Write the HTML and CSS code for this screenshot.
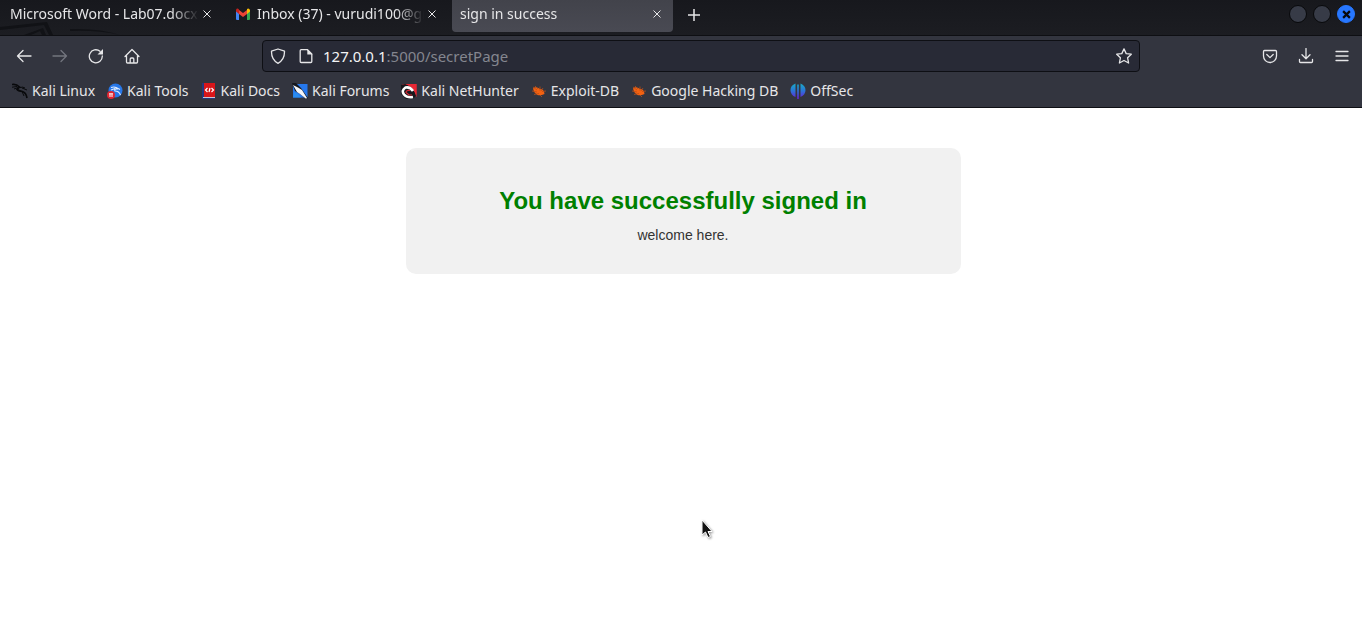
FILE: index.html
```html
<!DOCTYPE html>
<html lang="en">
<head>
<meta charset="utf-8">
<title>sign in success</title>
<link rel="stylesheet" href="styles.css">
</head>
<body>
<header class="browser">
  <div class="tabbar">
    <svg class="wallpaper" viewBox="0 0 130 36" aria-hidden="true"><path d="M0 27 47 22 53 35H49L44 25 0 30ZM24 35 43 28 46 35H42L40 31 31 35ZM70 29Q100 28 120 35 98 30 70 31Z" fill="#111216"/></svg>
    <div class="tab">
      <span class="tab-title">Microsoft Word - Lab07.docx</span>
      <button class="close" aria-label="Close tab"><svg viewBox="0 0 8 8"><path d="M.5.5l7 7M7.500.5l-7 7"/></svg></button>
    </div>
    <div class="tab tab-mail">
      <svg class="mail" viewBox="0 0 16 12" aria-hidden="true"><path d="M1 2v9q0 1 1 1h2V4z" fill="#4285f4"/><path d="M12 4v8h2q1 0 1-1V2z" fill="#34a853"/><path d="M12 2v4l3-2.500V2Q14-.5 12 1z" fill="#fbbc04"/><path d="M4 6V2l4 3 4-3v4L8 9z" fill="#ea4335"/><path d="M1 2v1.500L4 6V1.500Q2-.5 1 2z" fill="#c5221f"/></svg>
      <span class="tab-title">Inbox (37) - vurudi100@gr</span>
      <button class="close" aria-label="Close tab"><svg viewBox="0 0 8 8"><path d="M.5.5l7 7M7.500.5l-7 7"/></svg></button>
    </div>
    <div class="tab tab-active">
      <span class="tab-title">sign in success</span>
      <button class="close" aria-label="Close tab"><svg viewBox="0 0 8 8"><path d="M.5.5l7 7M7.500.5l-7 7"/></svg></button>
    </div>
    <button class="new-tab" aria-label="New tab"><svg viewBox="0 0 12 12"><path d="M6 0v12M0 6h12"/></svg></button>
    <div class="window-controls">
      <button class="dot" aria-label="Minimize"></button>
      <button class="dot" aria-label="Maximize"></button>
      <button class="dot dot-close" aria-label="Close window"><svg viewBox="0 0 8 8"><path d="M1 1l6 6M7 1L1 7"/></svg></button>
    </div>
  </div>
  <div class="navbar">
    <div class="nav-group">
      <button class="icon" aria-label="Back"><svg viewBox="0 0 16 16"><path d="M15 8H1.500M7 2.500 1.500 8 7 13.500"/></svg></button>
      <button class="icon" aria-label="Forward" disabled><svg viewBox="0 0 16 16"><path d="M1 8h13.500M9 2.500 14.500 8 9 13.500"/></svg></button>
      <button class="icon" aria-label="Reload"><svg viewBox="0 0 16 16"><path d="M14.300 8A6.500 6.500 0 1 1 12 3.300"/><path d="M15 1v5.500H9.500z" fill="currentColor" stroke="none"/></svg></button>
      <button class="icon" aria-label="Home"><svg viewBox="0 0 16 16"><path d="M1 8.500 8 1.500l7 7M2.500 7.500V14q0 1 1 1h9q1 0 1-1V7.500M6.200 15v-4q0-1 1-1h1.600q1 0 1 1v4"/></svg></button>
    </div>
    <form class="address">
      <svg class="glyph" viewBox="0 0 16 16" aria-hidden="true"><path d="M8 1 1.500 3.200C1.300 9.500 3.500 13 8 15.300c4.500-2.300 6.700-5.800 6.500-12.100z"/></svg>
      <svg class="glyph glyph-page" viewBox="0 0 16 16" aria-hidden="true"><path d="M9.500 1.700H3.200q-1 0-1 1v10.800q0 1 1 1h9.600q1 0 1-1V6z"/><path d="M9.300 1v5.500H14.500z" fill="currentColor" stroke="none"/></svg>
      <label class="host" for="url">127.0.0.1</label><input class="path" id="url" type="text" value=":5000/secretPage" spellcheck="false">
      <button class="star" type="button" aria-label="Bookmark"><svg viewBox="0 0 16 16"><path d="M8 .9l2.200 4.700 5.100.6-3.700 3.600 1 5.200L8 12.500 3.400 15l1-5.200L.7 6.200l5.100-.6z"/></svg></button>
    </form>
    <div class="nav-group nav-tools">
      <button class="icon" aria-label="Save to Pocket"><svg viewBox="0 0 16 16"><path d="M2.500 2.500h11q1 0 1 1V8a6.500 6.500 0 0 1-13 0V3.500q0-1 1-1zM4.800 6.500 8 9.600l3.200-3.100"/></svg></button>
      <button class="icon" aria-label="Downloads"><svg viewBox="0 0 16 16"><path d="M8 .5v10M4 6.700l4 4 4-4M1.500 11.500v2q0 1 1 1h11q1 0 1-1v-2"/></svg></button>
      <button class="icon" aria-label="Menu"><svg viewBox="0 0 16 16"><path d="M2 3.500h12M2 8h12M2 12.500h12"/></svg></button>
    </div>
  </div>
  <nav class="bookmarks">
    <a href="#kali"><svg viewBox="0 0 16 16"><g fill="none" stroke="#08090b"><path d="M0 1.500Q4 .5 7.500 4L5 6.300Q6 8 10.500 8.500 14 9.500 15 15" stroke-width="1.700"/><path d="M0 4.200 5 3.500M2 6l4-1.500M8 4.500q3-1 5 .5M10 5l5 2M10 8.500 12 13"/></g></svg>Kali Linux</a>
    <a href="#tools"><svg viewBox="0 0 16 16"><circle cx="8.500" cy="7.500" r="7" fill="#2777e8"/><path d="M4 4.500q5-1.500 6 1.500-3-.5-2 2 4 0 5.500 4M4 7l4-1.500M9 4.500l4 2" fill="none" stroke="#dceaff" stroke-width="1.200"/><circle cx="4" cy="12" r="4" fill="#df2632"/><path d="M2 10.800h4M3 11v3M5 11v3" stroke="#fff"/></svg>Kali Tools</a>
    <a href="#docs"><svg viewBox="0 0 16 16"><path d="M1 0h13v16H1z" fill="#25377e"/><path d="M3 0h11v14H3z" fill="#d9151a"/><path d="M2 14h12v1H2z" fill="#c9c5d5"/><path d="M6.500 5 4.500 7l2 2M10.500 5l2 2-2 2M9 5 8 9" fill="none" stroke="#fff" stroke-width="1.200"/></svg>Kali Docs</a>
    <a href="#forums"><svg viewBox="0 0 16 16"><path d="M1 1h14.500v13.500H1z" fill="#2678ed"/><path d="M0 0h4l5 5 7 10-2 1-6-5-5-3z" fill="#15181f"/><path d="M1 2 6 4.500 10 7l5 8-1 .8L8 11 5 9z" fill="#f4f6fa"/><path d="M2 9 1 14.500h8L6 11z" fill="#2a8cf0"/></svg>Kali Forums</a>
    <a href="#nethunter"><svg viewBox="0 0 16 16"><path d="M1 1h14.500v13L13 12 4 4z" fill="#e82734"/><path d="M0 2 4 1l8 3 3 9-3 3H5l-5-5z" fill="#17181d"/><path d="M5 1h10.500v11L11 5z" fill="#e82734"/><path d="M12 8Q9 3.500 4.500 4.500 0 7.500 3 11.500q3 3.500 9 2.500" fill="none" stroke="#fff" stroke-width="2.600"/><path d="M9 7.500Q5 7 5 9.500l3 2.500h3" fill="none" stroke="#d42a36" stroke-width="1.200"/></svg>Kali NetHunter</a>
    <a href="#exploit"><svg viewBox="0 0 16 16"><path d="M2 5.500Q5 3 9 6q4 0 4.500 5-4 2-7 1Q3 10 2 5.500z" fill="#f26111"/><path d="M2 4 6 7M1 8l5 1M3 11.500l5-1M9 3.500v4M12 5l-2 3M11 8.500l4-.5M9 12l2 2M4 3l3 3" stroke="#b94e18" stroke-width=".8"/></svg>Exploit-DB</a>
    <a href="#ghdb"><svg viewBox="0 0 16 16"><path d="M2 5.500Q5 3 9 6q4 0 4.500 5-4 2-7 1Q3 10 2 5.500z" fill="#f26111"/><path d="M2 4 6 7M1 8l5 1M3 11.500l5-1M9 3.500v4M12 5l-2 3M11 8.500l4-.5M9 12l2 2M4 3l3 3" stroke="#b94e18" stroke-width=".8"/></svg>Google Hacking DB</a>
    <a href="#offsec"><svg viewBox="0 0 16 16"><defs><linearGradient id="violet" gradientUnits="userSpaceOnUse" x1="0" y1="0" x2="0" y2="16"><stop stop-color="#16b0c4"/><stop offset=".5" stop-color="#2b73d8"/><stop offset="1" stop-color="#6a1bd5"/></linearGradient></defs><path d="M5.500 .5v13.500Q.5 12 .5 7.200T5.500 .5zM7.200 1.500h1.600V16H7.200zM10.500 .5q5 2 5 6.700t-5 6.800z" fill="url(#violet)"/></svg>OffSec</a>
  </nav>
</header>
<main class="page">
  <section class="card">
    <h1>You have successfully signed in</h1>
    <p>welcome here.</p>
  </section>
</main>
<svg class="cursor" viewBox="0 0 12 20" aria-hidden="true"><path d="M1 1v15l3.500-3 2.500 5.500 2.500-1-2.500-5h4z" fill="#111" stroke="#fff"/></svg>
</body>
</html>
```
FILE: styles.css
```css
* { box-sizing: border-box; }
body { margin: 0; background: #fff; }
button { display: flex; align-items: center; justify-content: center; padding: 0; border: 0; background: none; color: inherit; }
svg { display: block; flex: none; }
.browser { font: 14px/20px "Noto Sans", sans-serif; color: #e6e6e8; background: #33353f; border-bottom: 1px solid #0e0f14; }

.tabbar { position: relative; display: flex; align-items: flex-start; height: 36px; background: linear-gradient(#17181d, #1c1d22); border-bottom: 1px solid #0e0f13; }
.wallpaper { position: absolute; left: 0; top: 0; width: 130px; height: 36px; }
.tab { position: relative; display: flex; align-items: center; width: 221px; height: 32px; margin-right: 4px; padding: 0 10px 4px; }
.tab-title { flex: 1; min-width: 0; overflow: hidden; white-space: nowrap; mask-image: linear-gradient(to left, transparent, #000 28px); }
.tab-mail { margin-right: 6px; }
.mail { width: 16px; height: 12px; margin-right: 6px; }
.tab-active { padding: 0 12px 4px 8px; background: linear-gradient(#42434b, #494a53); border-radius: 0 0 4px 4px; }
.close { width: 8px; height: 20px; margin-left: 4px; }
.close svg { width: 8px; height: 8px; overflow: visible; }
.close svg, .new-tab svg { fill: none; stroke: #e6e6e8; }
.new-tab { width: 34px; height: 30px; }
.new-tab svg { width: 12px; height: 12px; stroke-width: 1.5; }
.window-controls { display: flex; gap: 6px; margin-left: auto; padding: 5px 7px 0 0; }
.dot { width: 18px; height: 18px; border: 1px solid #08090b; border-radius: 50%; background: #373b47; }
.dot-close { border-color: #2777ff; background: #2777ff; }
.dot svg { width: 9px; height: 9px; stroke: #08090b; stroke-width: 2; }

.navbar { display: flex; align-items: center; justify-content: space-between; height: 40px; padding: 0 8px 0 12px; }
.nav-group { display: flex; gap: 12px; width: 250px; }
.icon { width: 24px; height: 24px; }
.icon:disabled { color: #73757e; }
.icon svg, .glyph, .star svg { width: 16px; height: 16px; fill: none; stroke: currentColor; stroke-width: 1.3; stroke-linecap: round; stroke-linejoin: round; }
.nav-tools { width: 210px; justify-content: flex-end; }
.address { display: flex; align-items: center; flex: 1; max-width: 878px; height: 32px; margin-right: auto; padding: 0 7px; font-size: 15px; background: #282a36; border: 1px solid #0e0f14; border-radius: 4px; }
.glyph-page { margin: 0 9px 0 12px; }
.host { color: #f4f4f5; }
.path { flex: 1; min-width: 0; padding: 0; border: 0; outline: 0; background: none; color: #84868f; font: inherit; }

.bookmarks { display: flex; align-items: center; gap: 12px; height: 31px; padding: 0 12px 2px; white-space: nowrap; }
.bookmarks a { display: flex; align-items: center; gap: 4px; color: inherit; text-decoration: none; }
.bookmarks svg { width: 16px; height: 16px; }

.page { padding: 40px 8px 40px 12px; font-family: "Liberation Sans", Arial, sans-serif; text-align: center; }
.card { max-width: 555px; margin: 0 auto; padding: 38px 20px 30px; background: #f1f1f1; border-radius: 10px; }
.card h1 { margin: 0 0 10px; font-size: 24px; line-height: 30px; color: #008000; }
.card p { margin: 0; font-size: 14px; line-height: 18px; color: #333; }
.cursor { position: absolute; left: 701px; top: 519px; width: 12px; height: 20px; filter: drop-shadow(1px 1px 1px #0006); }
```
